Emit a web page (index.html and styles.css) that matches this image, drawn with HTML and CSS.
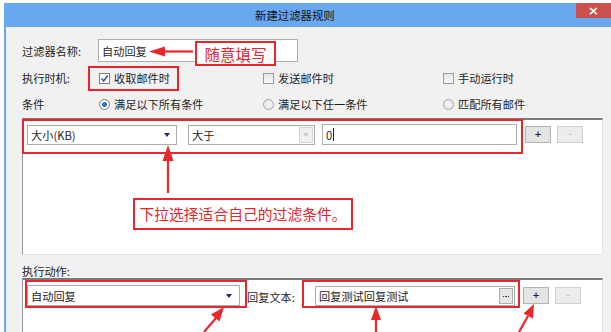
FILE: index.html
```html
<!DOCTYPE html>
<html lang="zh">
<head>
<meta charset="utf-8">
<title>新建过滤器规则</title>
<link rel="stylesheet" href="styles.css">
</head>
<body>
<div class="dialog">
  <div class="titlebar">
    <span class="title">新建过滤器规则</span>
    <span class="close">×</span>
  </div>
  <div class="content">
    <div class="row row-name">
      <span class="label">过滤器名称:</span>
      <div class="textbox name-box"><span>自动回复</span></div>
    </div>
    <div class="row row-opts">
      <span class="label">执行时机:</span>
      <div class="opt opt1"><span class="check on"><svg width="9" height="9" viewBox="0 0 9 9"><path d="M1.5 4.5 L3.6 7 L7.8 1.5" fill="none" stroke="#2a5fa8" stroke-width="1.6"/></svg></span>收取邮件时</div>
      <div class="opt opt2"><span class="check"></span>发送邮件时</div>
      <div class="opt opt3"><span class="check"></span>手动运行时</div>
    </div>
    <div class="row row-opts">
      <span class="label">条件</span>
      <div class="opt opt1"><span class="radio on"></span>满足以下所有条件</div>
      <div class="opt opt2"><span class="radio"></span>满足以下任一条件</div>
      <div class="opt opt3"><span class="radio"></span>匹配所有邮件</div>
    </div>
    <div class="panel cond-panel">
      <div class="panel-row">
        <div class="combo combo-field"><span>大小(KB)</span><span class="arrow"></span></div>
        <div class="combo combo-op"><span>大于</span><span class="dd-btn"><span class="arrow dis"></span></span></div>
        <div class="textbox value-box"><span>0</span><span class="caret"></span></div>
        <div class="btn btn-plus">+</div>
        <div class="btn btn-minus">-</div>
      </div>
    </div>
    <div class="section-label">执行动作:</div>
    <div class="panel act-panel">
      <div class="panel-row act-row">
        <div class="combo combo-act"><span>自动回复</span><span class="arrow"></span></div>
        <span class="reply-label">回复文本:</span>
        <div class="textbox reply-box"><span class="reply-text">回复测试回复测试</span><span class="dots"><i></i><i></i><i></i></span></div>
        <div class="btn btn-plus2">+</div>
        <div class="btn btn-minus">-</div>
      </div>
    </div>
  </div>
</div>

<div class="note note-name">随意填写</div>
<div class="note note-cond">下拉选择适合自己的过滤条件。</div>
<svg class="marks" width="611" height="332" viewBox="0 0 611 332">
  <g fill="none" stroke="#e8262b" stroke-width="2">
    <rect x="89" y="67" width="89" height="23"/>
    <rect x="23" y="120" width="499" height="33"/>
    <rect x="26" y="281" width="220" height="26"/>
    <rect x="303" y="281" width="216" height="26"/>
  </g>
  <g stroke="#e8262b" stroke-width="2.2" fill="none">
    <line x1="193" y1="51.5" x2="162" y2="51.5"/>
    <line x1="168" y1="193" x2="168" y2="158"/>
    <line x1="204" y1="332" x2="216" y2="318"/>
    <line x1="376" y1="332" x2="376" y2="318"/>
    <line x1="519" y1="332" x2="528" y2="316"/>
  </g>
  <g fill="#e8262b">
    <polygon points="149,51.5 165,46.5 165,56.5"/>
    <polygon points="168,145 162.5,161 173.5,161"/>
    <polygon points="224,307 219.5,321.5 211,314.5"/>
    <polygon points="376,306 371,320 381,320"/>
    <polygon points="534,304 533,318.5 523.5,313.5"/>
  </g>
</svg>
</body>
</html>
```

FILE: styles.css
```css
* { box-sizing: border-box; }
html, body { margin: 0; padding: 0; }
body {
  width: 611px;
  height: 332px;
  overflow: hidden;
  background: #ffffff;
  font-family: "Noto Sans CJK SC", "Noto Sans", sans-serif;
  font-size: 11.2px;
  color: #1e1e1e;
  position: relative;
}
.dialog {
  margin: 3px 0 0 4px;
  height: 329px;
  border-left: 2px solid #69a7ee;
  background: #f1f1f1;
}
.titlebar {
  height: 24px;
  background: #69a7ee;
  display: flex;
  align-items: center;
}
.title {
  margin-left: 249px;
  font-size: 11.4px;
  line-height: 14px;
  color: #111;
}
.close {
  margin-left: auto;
  align-self: flex-start;
  width: 35px;
  height: 15px;
  background: #c9514d;
  color: #fff;
  font-family: "DejaVu Sans", sans-serif;
  font-size: 13px;
  font-weight: bold;
  line-height: 15px;
  text-align: center;
}
.content {
  padding-left: 16px;
}
.row {
  display: flex;
  align-items: center;
  line-height: 14px;
}
.row-name {
  margin-top: 12px;
  height: 23px;
}
.row-opts {
  height: 26px;
}
.row-name + .row-opts { margin-top: 3px; }
.label {
  width: 76px;
  flex: none;
}
.row-opts .label { width: 77px; }
.textbox {
  background: #fff;
  border: 1px solid #adadad;
  display: flex;
  align-items: center;
  padding-left: 3px;
  line-height: 14px;
}
.name-box {
  width: 200px;
  height: 23px;
}
.opt {
  display: flex;
  align-items: center;
  flex: none;
}
.opt1 { width: 164px; }
.opt2 { width: 180px; }
.check {
  width: 11px;
  height: 11px;
  border: 1px solid #9a9a9a;
  background: linear-gradient(#e6e6e6, #f8f8f8);
  margin-right: 4px;
  display: flex;
  align-items: center;
  justify-content: center;
}
.check.on {
  background: #fff;
  border-color: #7b7b7b;
}
.radio {
  width: 11px;
  height: 11px;
  border-radius: 50%;
  border: 1px solid #a2a2a2;
  background: radial-gradient(circle, #f6f6f6 0, #e2e2e2 100%);
  margin-right: 4px;
  flex: none;
}
.radio.on {
  background: radial-gradient(circle, #1f66c2 0, #3a84d8 35%, #ffffff 45%, #f0f0f0 100%);
  border-color: #7f7f7f;
}
.panel {
  width: 581px;
  background: #fff;
  border-top: 2px solid #7a7a7a;
  border-left: 1px solid #9c9c9c;
  border-right: 1px solid #e2e2e2;
  border-bottom: 1px solid #e2e2e2;
}
.cond-panel {
  margin-top: 1px;
  height: 137px;
  padding: 4px 0 0 4px;
}
.panel-row {
  display: flex;
  align-items: center;
}
.combo {
  background: #fff;
  border: 1px solid #acacac;
  height: 20px;
  display: flex;
  align-items: center;
  padding-left: 3px;
  line-height: 14px;
  flex: none;
}
.combo > span:first-child { flex: 1; }
.combo-field { width: 150px; }
.combo-field .arrow { margin-right: 6px; }
.arrow {
  width: 0;
  height: 0;
  border-left: 3.5px solid transparent;
  border-right: 3.5px solid transparent;
  border-top: 4px solid #1c2c6e;
}
.arrow.dis { border-top-color: #c9c9c9; }
.combo-op {
  width: 127px;
  margin-left: 11px;
  padding-right: 1px;
}
.dd-btn {
  width: 14px;
  height: 16px;
  border: 1px solid #d3d3d3;
  background: #efefef;
  display: flex;
  align-items: center;
  justify-content: center;
}
.value-box {
  width: 195px;
  height: 21px;
  margin-left: 7px;
}
.caret {
  width: 1px;
  height: 13px;
  background: #222;
  margin-left: 1px;
}
.btn {
  width: 26px;
  height: 17px;
  border: 1px solid #b3b3b3;
  background: #e4e4e4;
  font-family: "DejaVu Sans", sans-serif;
  font-size: 9px;
  font-weight: bold;
  line-height: 15px;
  text-align: center;
  color: #222;
  flex: none;
}
.btn-plus { margin-left: 8px; }
.btn-minus {
  margin-left: 6px;
  background: #ececec;
  border-color: #cfcfcf;
  color: #b0b0b0;
  font-weight: normal;
}
.section-label {
  margin-top: 9px;
  line-height: 14px;
  height: 14px;
}
.act-panel {
  margin-top: 0;
  height: 60px;
  padding: 5px 0 0 4px;
  border-bottom: none;
}
.combo-act {
  width: 213px;
  height: 21px;
}
.combo-act .arrow { margin-right: 7px; }
.reply-label {
  width: 68px;
  margin-left: 7px;
  flex: none;
  line-height: 14px;
  margin-top: 2px;
}
.reply-box {
  width: 200px;
  height: 20px;
  padding-right: 1px;
}
.reply-text { flex: 1; }
.dots {
  flex: none;
  width: 14px;
  height: 16px;
  border: 1px solid #adadad;
  background: #e6e6e6;
  display: flex;
  align-items: center;
  justify-content: center;
  gap: 1px;
  padding-top: 2px;
}
.dots i {
  width: 1.5px;
  height: 1.5px;
  background: #333;
}
.btn-plus2 { margin-left: 8px; }

.note {
  position: absolute;
  border: 2px solid #e8262b;
  color: #e3262b;
  display: flex;
  align-items: center;
  justify-content: center;
}
.note-name {
  left: 195px;
  top: 41px;
  width: 81px;
  height: 25px;
  font-size: 15.5px;
  line-height: 18px;
  background: #fff;
}
.note-cond {
  left: 133px;
  top: 198px;
  width: 220px;
  height: 32px;
  font-size: 14.8px;
  line-height: 18px;
  background: #fff;
}
.marks {
  position: absolute;
  left: 0;
  top: 0;
  pointer-events: none;
}
```
